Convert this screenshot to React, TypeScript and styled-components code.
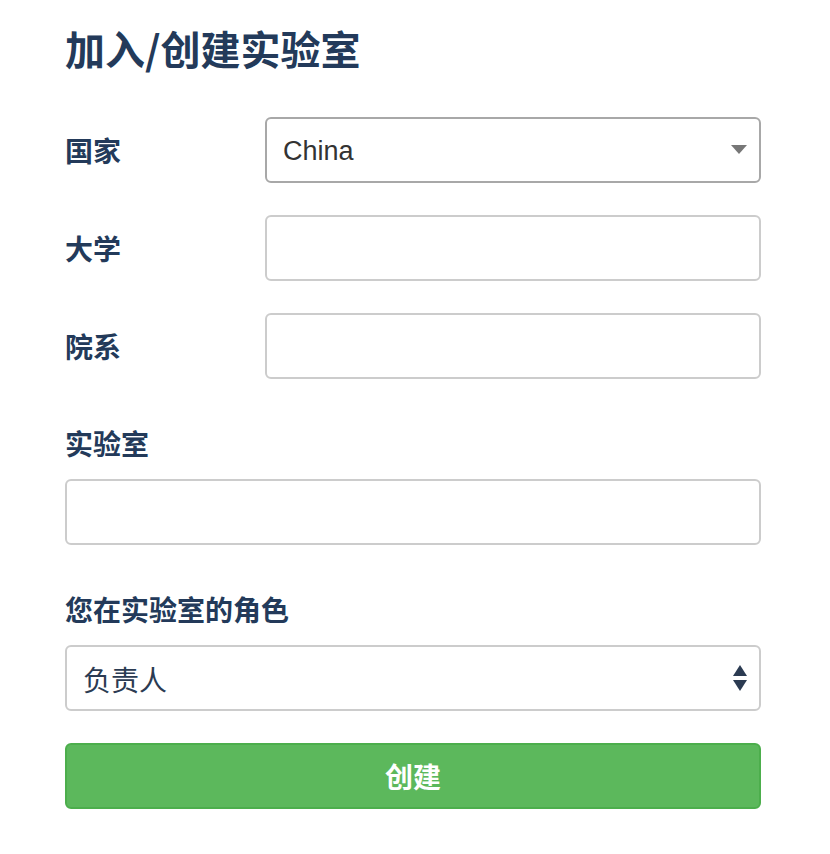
import React from "react";
import styled, { createGlobalStyle } from "styled-components";

const GlobalStyle = createGlobalStyle`
  html, body {
    margin: 0;
    padding: 0;
    background: #ffffff;
  }
  body {
    font-family: "Liberation Sans", "Noto Sans CJK SC", sans-serif;
  }
`;

const NAVY = "#233a5a";

const Page = styled.div`
  width: 696px;
  padding: 24px 0 40px 65px;
`;

const Title = styled.h2`
  margin: 0 0 45px 0;
  font-family: "Noto Sans CJK SC", sans-serif;
  font-size: 40px;
  line-height: 48px;
  font-weight: 700;
  color: ${NAVY};
`;

const Row = styled.div`
  display: flex;
  flex-direction: row;
  align-items: center;
  margin-bottom: 32px;
`;

const Group = styled.div`
  display: flex;
  flex-direction: column;
  margin-bottom: 32px;
`;

const Label = styled.label<{ $stacked?: boolean }>`
  font-family: "Noto Sans CJK SC", sans-serif;
  font-size: 28px;
  line-height: 36px;
  font-weight: 700;
  color: ${NAVY};
  width: ${(p) => (p.$stacked ? "auto" : "200px")};
  flex-shrink: 0;
  margin: ${(p) => (p.$stacked ? "14px 0 18px 0" : "0")};
`;

const Field = styled.div<{ $dark?: boolean }>`
  position: relative;
  flex: 1 1 auto;
  box-sizing: border-box;
  height: 66px;
  border: 2px solid ${(p) => (p.$dark ? "#a8a8a8" : "#cccccc")};
  border-radius: 6px;
  background: #ffffff;
  display: flex;
  align-items: center;
  padding: 2px 16px 0 16px;
`;

const Value = styled.span<{ $cjk?: boolean }>`
  font-family: ${(p) =>
    p.$cjk
      ? `"Noto Sans CJK SC", sans-serif`
      : `"Liberation Sans", "Noto Sans CJK SC", sans-serif`};
  font-size: ${(p) => (p.$cjk ? "28px" : "27px")};
  color: ${(p) => (p.$cjk ? "#2b3b52" : "#333333")};
`;

const Arrow = styled.span`
  position: absolute;
  right: 12px;
  top: 50%;
  transform: translateY(-50%);
  display: flex;
`;

const Button = styled.button`
  display: block;
  width: 100%;
  box-sizing: border-box;
  height: 66px;
  border: 2px solid #4cae4c;
  border-radius: 6px;
  background: #5cb85c;
  color: #ffffff;
  font-family: "Noto Sans CJK SC", sans-serif;
  font-size: 28px;
  font-weight: 700;
  cursor: pointer;
`;

const DownArrow = () => (
  <svg width="16" height="10" viewBox="0 0 16 10">
    <polygon points="0,0 16,0 8,9" fill="#777777" />
  </svg>
);

const UpDownArrow = () => (
  <svg width="14" height="26" viewBox="0 0 14 26">
    <polygon points="7,0 14,11 0,11" fill="#2b3b52" />
    <polygon points="0,15 14,15 7,26" fill="#2b3b52" />
  </svg>
);

export default function App() {
  return (
    <>
      <GlobalStyle />
      <Page>
        <Title>加入/创建实验室</Title>
        <Row>
          <Label>国家</Label>
          <Field $dark>
            <Value>China</Value>
            <Arrow>
              <DownArrow />
            </Arrow>
          </Field>
        </Row>
        <Row>
          <Label>大学</Label>
          <Field />
        </Row>
        <Row>
          <Label>院系</Label>
          <Field />
        </Row>
        <Group>
          <Label $stacked>实验室</Label>
          <Field />
        </Group>
        <Group>
          <Label $stacked>您在实验室的角色</Label>
          <Field>
            <Value $cjk>负责人</Value>
            <Arrow>
              <UpDownArrow />
            </Arrow>
          </Field>
        </Group>
        <Button>创建</Button>
      </Page>
    </>
  );
}
